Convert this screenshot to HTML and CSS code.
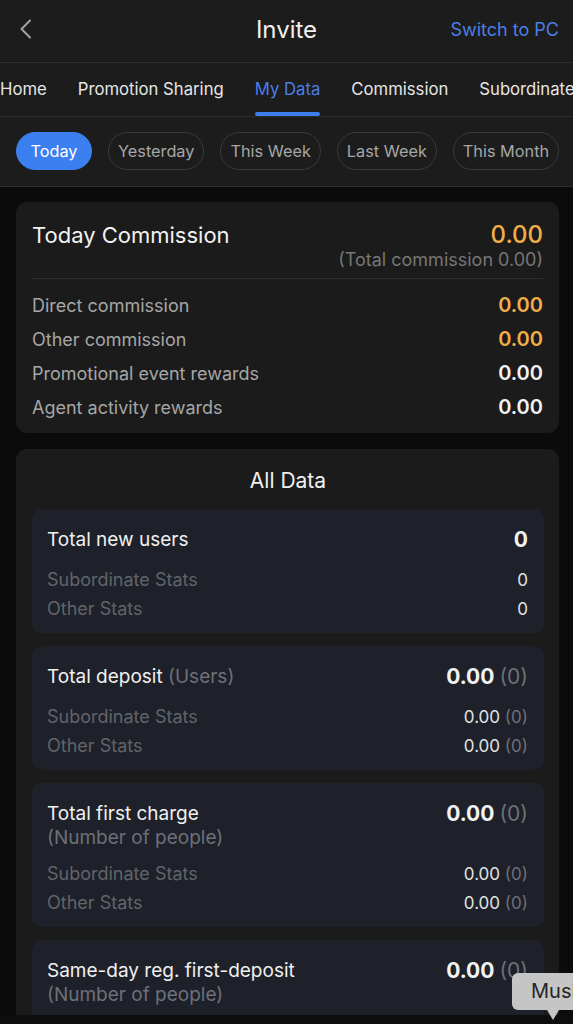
FILE: index.html
```html
<!DOCTYPE html>
<html lang="en">
<head>
<meta charset="utf-8">
<meta name="viewport" content="width=device-width, initial-scale=1">
<title>Invite</title>
<link rel="stylesheet" href="styles.css">
</head>
<body>
<div class="page">
  <header class="topbar">
    <button class="back" aria-label="Back">
      <svg width="14" height="20" viewBox="0 0 14 20"><path d="M11 1.5 L2.5 10 L11 18.5" fill="none" stroke="#a3a3a3" stroke-width="2" stroke-linecap="round" stroke-linejoin="round"/></svg>
    </button>
    <h1 class="title">Invite</h1>
    <a class="switch" href="#">Switch to PC</a>
  </header>

  <nav class="tabs">
    <span class="tab">Home</span>
    <span class="tab">Promotion Sharing</span>
    <span class="tab active">My Data</span>
    <span class="tab">Commission</span>
    <span class="tab">Subordinate</span>
  </nav>

  <div class="chips">
    <span class="chip active">Today</span>
    <span class="chip">Yesterday</span>
    <span class="chip">This Week</span>
    <span class="chip">Last Week</span>
    <span class="chip">This Month</span>
  </div>

  <main class="content">
    <section class="card commission">
      <div class="comm-head">
        <div class="comm-title">Today Commission</div>
        <div class="comm-total">
          <div class="amount gold">0.00</div>
          <div class="total-note">(Total commission 0.00)</div>
        </div>
      </div>
      <ul class="comm-list">
        <li><span>Direct commission</span><b class="gold">0.00</b></li>
        <li><span>Other commission</span><b class="gold">0.00</b></li>
        <li><span>Promotional event rewards</span><b>0.00</b></li>
        <li><span>Agent activity rewards</span><b>0.00</b></li>
      </ul>
    </section>

    <section class="card alldata">
      <h2 class="card-title">All Data</h2>

      <div class="stat-box">
        <div class="stat-main">
          <div class="stat-name">Total new users</div>
          <div class="stat-value">0</div>
        </div>
        <ul class="stat-rows">
          <li><span>Subordinate Stats</span><span class="num">0</span></li>
          <li><span>Other Stats</span><span class="num">0</span></li>
        </ul>
      </div>

      <div class="stat-box">
        <div class="stat-main">
          <div class="stat-name">Total deposit <span class="unit">(Users)</span></div>
          <div class="stat-value">0.00 <span class="cnt">(0)</span></div>
        </div>
        <ul class="stat-rows">
          <li><span>Subordinate Stats</span><span class="num">0.00 <i>(0)</i></span></li>
          <li><span>Other Stats</span><span class="num">0.00 <i>(0)</i></span></li>
        </ul>
      </div>

      <div class="stat-box">
        <div class="stat-main">
          <div class="stat-name">Total first charge<div class="sub-unit">(Number of people)</div></div>
          <div class="stat-value">0.00 <span class="cnt">(0)</span></div>
        </div>
        <ul class="stat-rows">
          <li><span>Subordinate Stats</span><span class="num">0.00 <i>(0)</i></span></li>
          <li><span>Other Stats</span><span class="num">0.00 <i>(0)</i></span></li>
        </ul>
      </div>

      <div class="stat-box">
        <div class="stat-main">
          <div class="stat-name">Same-day reg. first-deposit<div class="sub-unit">(Number of people)</div></div>
          <div class="stat-value">0.00 <span class="cnt">(0)</span></div>
        </div>
        <ul class="stat-rows">
          <li><span>Subordinate Stats</span><span class="num">0.00 <i>(0)</i></span></li>
          <li><span>Other Stats</span><span class="num">0.00 <i>(0)</i></span></li>
        </ul>
      </div>
    </section>
  </main>

  <div class="music-tip">Music</div>
  <div class="bottom-edge"></div>
</div>
</body>
</html>
```

FILE: styles.css
```css
* { box-sizing: border-box; }

html, body {
  margin: 0;
  padding: 0;
  background: #0b0b0b;
  color: #ececec;
  font-family: Inter, "Noto Sans", Roboto, sans-serif;
  -webkit-font-smoothing: antialiased;
}

.page {
  width: 573px;
  height: 1024px;
  overflow: hidden;
  position: relative;
}

/* top bar */
.topbar {
  height: 63px;
  background: #1c1c1c;
  border-bottom: 1px solid #2e2e2e;
  display: flex;
  align-items: center;
  position: relative;
  padding: 0 14px 0 19px;
}
.back {
  background: none;
  border: 0;
  padding: 0;
  width: 20px;
  height: 24px;
  display: flex;
  align-items: center;
  margin-top: -4px;
}
.title {
  position: absolute;
  left: 0;
  right: 0;
  margin: 0;
  text-align: center;
  font-size: 24px;
  font-weight: 400;
  color: #f0f0f0;
  pointer-events: none;
  margin-top: -4px;
}
.switch {
  margin-left: auto;
  color: #4a7fe6;
  text-decoration: none;
  font-size: 18px;
  margin-top: -4px;
}

/* tab strip */
.tabs {
  height: 54px;
  background: #1c1c1c;
  border-bottom: 1px solid #2e2e2e;
  display: flex;
  gap: 31px;
  white-space: nowrap;
  overflow: hidden;
}
.tab {
  font-size: 16.7px;
  color: #e6e6e6;
  line-height: 52px;
  position: relative;
  flex: none;
}
.tab.active { color: #4a7fe6; }
.tab.active::after {
  content: "";
  position: absolute;
  left: 0;
  right: 0;
  bottom: 0;
  height: 4px;
  border-radius: 2px;
  background: #3f7ded;
}

/* date filter */
.chips {
  height: 70px;
  background: #1c1c1c;
  border-bottom: 1px solid #2e2e2e;
  display: flex;
  gap: 16px;
  padding: 15px 16px 0;
  white-space: nowrap;
}
.chip {
  height: 38px;
  min-width: 76px;
  padding: 0 9px;
  border: 1px solid #3a3a3a;
  border-radius: 19px;
  font-size: 16.3px;
  color: #a6a6a6;
  display: flex;
  align-items: center;
  justify-content: center;
  flex: none;
}
.chip.active {
  background: #3b7ff0;
  border-color: #3b7ff0;
  color: #ffffff;
}

/* cards */
.content {
  padding: 15px 14px 0 16px;
  display: flex;
  flex-direction: column;
  gap: 16px;
}
.card {
  background: #1b1b1b;
  border-radius: 11px;
}

.commission { padding: 20px 16px 9px; }
.comm-head {
  display: flex;
  justify-content: space-between;
  align-items: flex-start;
  padding-bottom: 6px;
  border-bottom: 1px solid #2f2f2f;
}
.comm-title {
  font-size: 22px;
  line-height: 26px;
  color: #f2f2f2;
}
.comm-total { text-align: right; }
.amount {
  font-size: 24px;
  line-height: 26px;
  font-weight: 500;
}
.gold { color: #efae47; }
.total-note {
  font-size: 18px;
  line-height: 24px;
  color: #767676;
}
.comm-list {
  list-style: none;
  margin: 0;
  padding: 9px 0 0;
}
.comm-list li {
  display: flex;
  justify-content: space-between;
  align-items: center;
  height: 34px;
  font-size: 18px;
  color: #a6a6a6;
}
.comm-list b {
  font-size: 20px;
  font-weight: 600;
  color: #f2f2f2;
}
.comm-list b.gold { color: #efae47; }

.alldata { padding: 18px 15px 20px 16px; }
.card-title {
  margin: 0 0 14px;
  font-size: 21px;
  line-height: 28px;
  font-weight: 400;
  text-align: center;
  color: #f0f0f0;
}
.stat-box {
  background: #1e2129;
  border-radius: 10px;
  padding: 17px 16px 10px 15px;
  margin-bottom: 13px;
}
.stat-main {
  display: flex;
  justify-content: space-between;
  align-items: flex-start;
}
.stat-name {
  font-size: 19px;
  line-height: 28px;
  color: #f0f0f0;
}
.unit, .sub-unit, .cnt { color: #6d7078; }
.sub-unit {
  font-size: 19px;
  line-height: 20px;
}
.stat-value {
  font-size: 21px;
  line-height: 28px;
  font-weight: 700;
  color: #f2f2f2;
  white-space: nowrap;
}
.cnt { font-weight: 400; }
.stat-rows {
  list-style: none;
  margin: 11px 0 0;
  padding: 0;
}
.stat-rows li {
  display: flex;
  justify-content: space-between;
  align-items: center;
  height: 29px;
  font-size: 18px;
  color: #616469;
}
.num { color: #e2e2e2; font-size: 17px; }
.num i { font-style: normal; color: #6d7078; }

/* floating hint at the lower right corner */
.music-tip {
  position: absolute;
  left: 512px;
  top: 973px;
  width: 110px;
  height: 37px;
  background: #c5c5c5;
  border-radius: 6px;
  color: #262626;
  font-size: 20px;
  line-height: 37px;
  padding-left: 19px;
  z-index: 2;
}
.music-tip::after {
  content: "";
  position: absolute;
  left: 35px;
  bottom: -10px;
  border-left: 6px solid transparent;
  border-right: 6px solid transparent;
  border-top: 10px solid #c5c5c5;
}
.bottom-edge {
  position: absolute;
  left: 0;
  right: 0;
  bottom: 0;
  height: 9px;
  background: #0e0e0e;
  z-index: 1;
}
```
